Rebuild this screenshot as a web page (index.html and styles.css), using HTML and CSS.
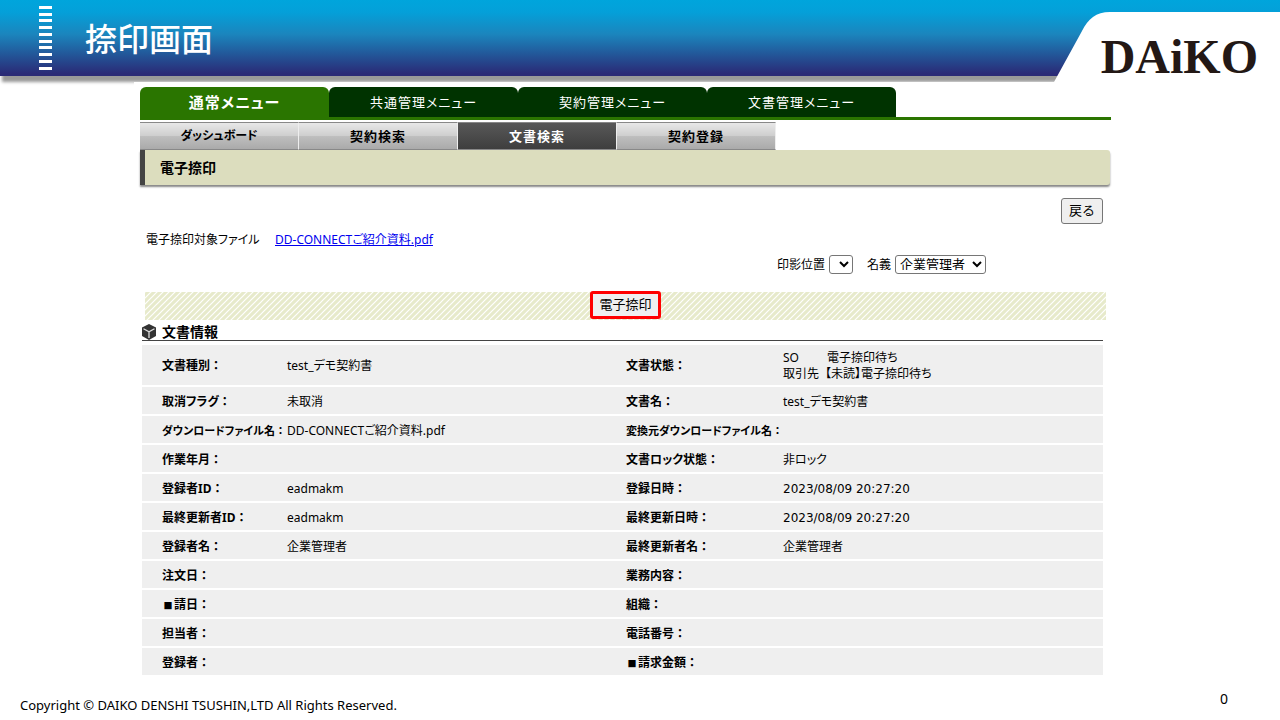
FILE: index.html
```html
<!DOCTYPE html>
<html lang="ja">
<head>
<meta charset="utf-8">
<title>捺印画面</title>
<link rel="stylesheet" href="styles.css">
</head>
<body>
<header class="banner">
  <svg class="ticks" viewBox="0 0 13 64" aria-hidden="true"><path fill="#fff" d="M0 0h13v3H0zM0 7h13v3H0zM0 13h13v3H0zM0 20h13v3H0zM0 27h13v3H0zM0 34h13v3H0zM0 40h13v3H0zM0 47h13v3H0zM0 54h13v3H0zM0 61h13v3H0z"/></svg>
  <h1 class="banner-title">捺印画面</h1>
  <svg class="corner" viewBox="0 0 226 78" aria-hidden="true"><path fill="#fff" d="M0 70 28 19C34 7 42 0 56 0H226V78H0z"/></svg>
  <div class="logo">DAiKO</div>
</header>

<main class="app">
  <nav class="menu">
    <a class="menu-tab menu-tab-active" href="#">通常メニュー</a>
    <a class="menu-tab" href="#">共通管理メニュー</a>
    <a class="menu-tab" href="#">契約管理メニュー</a>
    <a class="menu-tab" href="#">文書管理メニュー</a>
  </nav>
  <nav class="submenu">
    <a class="sub-tab sub-tab-small" href="#">ダッシュボード</a>
    <a class="sub-tab" href="#">契約検索</a>
    <a class="sub-tab sub-tab-active" href="#">文書検索</a>
    <a class="sub-tab" href="#">契約登録</a>
  </nav>
  <h2 class="page-title">電子捺印</h2>

  <div class="back-row"><button class="btn" type="button">戻る</button></div>
  <div class="file-row">
    <span class="file-label">電子捺印対象ファイル</span>
    <a class="file-link" href="#">DD-CONNECTご紹介資料.pdf</a>
  </div>
  <div class="options">
    <label class="option" for="pos">印影位置<select class="select select-empty" id="pos"><option></option></select></label>
    <label class="option" for="owner">名義<select class="select select-owner" id="owner"><option>企業管理者</option></select></label>
  </div>
  <div class="action-bar">
    <svg class="stripes" aria-hidden="true"><defs><pattern id="hatch" width="6" height="6" patternUnits="userSpaceOnUse"><path stroke="#fff" stroke-width="1.200" d="M-1 7 7 -1M-1 1 1 -1M5 7 7 5"/></pattern></defs><rect width="100%" height="100%" fill="url(#hatch)"/></svg>
    <button class="btn btn-marked" type="button">電子捺印</button>
  </div>

  <section class="info">
    <h3 class="info-title">
      <svg class="cube" viewBox="0 0 14 16" aria-hidden="true"><path fill="#333" d="M7 0 14 3.500V12L7 16 0 12V3.500z"/><path fill="none" stroke="#ddd" stroke-width="1.300" d="M1.500 4.800 7 7.800 12.500 4.800M7 7.800V14"/></svg>
      文書情報
    </h3>
    <table class="data">
      <colgroup><col class="c-label1"><col class="c-value1"><col class="c-label2"><col></colgroup>
      <tbody>
      <tr class="tall"><th>文書種別<span class="colon">：</span></th><td>test_デモ契約書</td><th>文書状態<span class="colon">：</span></th><td>
        <div class="state"><span>SO</span><span class="state-own">電子捺印待ち</span><span>取引先</span><span class="state-other">【未読】電子捺印待ち</span></div></td></tr>
      <tr><th>取消フラグ<span class="colon">：</span></th><td>未取消</td><th>文書名<span class="colon">：</span></th><td>test_デモ契約書</td></tr>
      <tr><th class="long">ダウンロードファイル名<span class="colon">：</span></th><td>DD-CONNECTご紹介資料.pdf</td><th class="long">変換元ダウンロードファイル名<span class="colon">：</span></th><td></td></tr>
      <tr><th>作業年月<span class="colon">：</span></th><td></td><th>文書ロック状態<span class="colon">：</span></th><td>非ロック</td></tr>
      <tr><th>登録者ID<span class="colon">：</span></th><td>eadmakm</td><th>登録日時<span class="colon">：</span></th><td class="date">2023/08/09 20:27:20</td></tr>
      <tr><th>最終更新者ID<span class="colon">：</span></th><td>eadmakm</td><th>最終更新日時<span class="colon">：</span></th><td class="date">2023/08/09 20:27:20</td></tr>
      <tr><th>登録者名<span class="colon">：</span></th><td>企業管理者</td><th>最終更新者名<span class="colon">：</span></th><td>企業管理者</td></tr>
      <tr><th>注文日<span class="colon">：</span></th><td></td><th>業務内容<span class="colon">：</span></th><td></td></tr>
      <tr><th><span class="mark">■</span>請日<span class="colon">：</span></th><td></td><th>組織<span class="colon">：</span></th><td></td></tr>
      <tr><th>担当者<span class="colon">：</span></th><td></td><th>電話番号<span class="colon">：</span></th><td></td></tr>
      <tr><th>登録者<span class="colon">：</span></th><td></td><th><span class="mark">■</span>請求金額<span class="colon">：</span></th><td></td></tr>
      </tbody>
    </table>
  </section>
</main>

<footer class="footer">
  <small class="copyright">Copyright © DAIKO DENSHI TSUSHIN,LTD All Rights Reserved.</small>
  <span class="page-no">0</span>
</footer>
</body>
</html>
```
FILE: styles.css
```css
* { box-sizing: border-box; }
body {
  margin: 0;
  background: #fff;
  color: #000;
  font: 12px/16px "Noto Sans", "Noto Sans CJK JP", sans-serif;
}
h1, h2, h3 { margin: 0; }

.banner {
  position: relative;
  display: flex;
  align-items: center;
  gap: 33px;
  height: 76px;
  padding-left: 39px;
  background: linear-gradient(#00a5dc 0, #04a0d9 16%, #1b85bd 45%, #2a2a76 97%);
  box-shadow: 2px 6px 3px #999;
}
.ticks { width: 13px; height: 64px; }
.banner-title { color: #fff; font-size: 32px; line-height: 38px; padding-bottom: 2px; font-weight: 500; font-family: "Noto Sans CJK JP", sans-serif; }
.corner { position: absolute; right: 0; top: 12px; width: 226px; height: 78px; }
.logo {
  position: absolute;
  right: 22px;
  top: 33px;
  color: #231815;
  font: bold 48px/48px "Liberation Serif", serif;
}

.app {
  position: relative;
  margin: 6px 169px 0 134px;
  padding: 5px 0 0 6px;
  background: #fff;
}
.menu { display: flex; border-bottom: 3px solid #2a7500; }
.menu-tab {
  width: 189px;
  height: 30px;
  border-radius: 6px 6px 0 0;
  background: #003300;
  color: #fff;
  font-size: 13px;
  line-height: 30px;
  letter-spacing: 1px;
  text-align: center;
  text-decoration: none;
  font-feature-settings: "palt";
}
.menu-tab-active { background: #2a7500; font-size: 15px; font-weight: bold; }

.submenu { display: flex; margin-top: 2px; }
.sub-tab {
  width: 159px;
  height: 28px;
  border-top: 1px solid #888;
  border-right: 1px solid #eee;
  border-bottom: 1px solid #888;
  background: linear-gradient(#e8e8e8, #cfcfcf 48%, #bebebe 52%, #aaa);
  color: #000;
  font-size: 13px;
  font-weight: bold;
  line-height: 26px;
  letter-spacing: 1px;
  text-align: center;
  text-decoration: none;
  font-feature-settings: "palt";
}
.sub-tab-small { font-size: 12px; letter-spacing: normal; }
.sub-tab-active { background: linear-gradient(#585858, #3e3e3e); color: #fff; }

.page-title {
  height: 35px;
  margin-right: 1px;
  padding-left: 15px;
  border-left: 5px solid #444;
  border-radius: 0 3px 3px 0;
  background: #dcddbe;
  box-shadow: 0 2px 2px #888;
  font-size: 14px;
  line-height: 35px;
}

.back-row { display: flex; justify-content: flex-end; margin-top: 13px; padding-right: 8px; }
.btn {
  height: 26px;
  padding: 0 7px 2px;
  border: 1px solid #767676;
  border-radius: 3px;
  background: #efefef;
  color: #000;
  font: 13px/20px "Noto Sans", "Noto Sans CJK JP", sans-serif;
}
.file-row { display: flex; margin-top: 8px; padding-left: 6px; font-feature-settings: "palt"; }
.file-label { width: 129px; }
.file-link { color: #0000ee; }

.options { display: flex; justify-content: flex-end; gap: 14px; margin-top: 7px; padding-right: 125px; }
.option { display: flex; align-items: center; gap: 4px; }
.select {
  height: 19px;
  padding: 0 0 3px;
  border: 1px solid #767676;
  border-radius: 3px;
  background: #fff;
  color: #000;
  font: 13px/16px "Liberation Sans", "Noto Sans CJK JP", sans-serif;
}
.select-empty { width: 24px; }
.select-owner { width: 91px; }

.action-bar {
  position: relative;
  display: flex;
  justify-content: center;
  align-items: flex-start;
  height: 28px;
  margin: 18px 5px 0;
  background: #e7eacb;
}
.stripes { position: absolute; inset: 0; width: 100%; height: 100%; }
.btn-marked { position: relative; height: 28px; margin-top: -1px; padding: 0 6px 2px; border: 3px solid #f00; }

.info { margin: 4px 8px 0 2px; }
.info-title {
  display: flex;
  align-items: center;
  gap: 6px;
  height: 17px;
  border-bottom: 1px solid #444;
  font-size: 14px;
  line-height: 16px;
}
.cube { width: 14px; height: 16px; }
.data { width: 100%; margin-top: 2px; border-collapse: separate; border-spacing: 0 2px; table-layout: fixed; font-feature-settings: "palt"; }
.data th, .data td { height: 27px; padding: 2px 0 0; background: #efefef; text-align: left; white-space: nowrap; }
.data th:first-child { padding-left: 20px; }
.data .tall th, .data .tall td { height: 40px; }
.data .long { font-size: 11px; }
.colon { font-feature-settings: normal; }
.mark { display: inline-block; width: 12px; font-size: 9px; line-height: 10px; text-align: center; }
.c-label1 { width: 145px; }
.c-value1 { width: 339px; }
.c-label2 { width: 157px; }
.state { display: grid; grid-template-columns: 38px auto; justify-content: start; }
.state-own { padding-left: 6px; }
.state-other { padding-left: 4px; }
.data .date { font-family: "DejaVu Sans", sans-serif; }

.footer { display: flex; justify-content: space-between; margin-top: 12px; padding: 0 52px 0 20px; }
.copyright { margin-top: 7px; font-size: 13px; line-height: 18px; }
.page-no { font-size: 14px; line-height: 20px; }
```
